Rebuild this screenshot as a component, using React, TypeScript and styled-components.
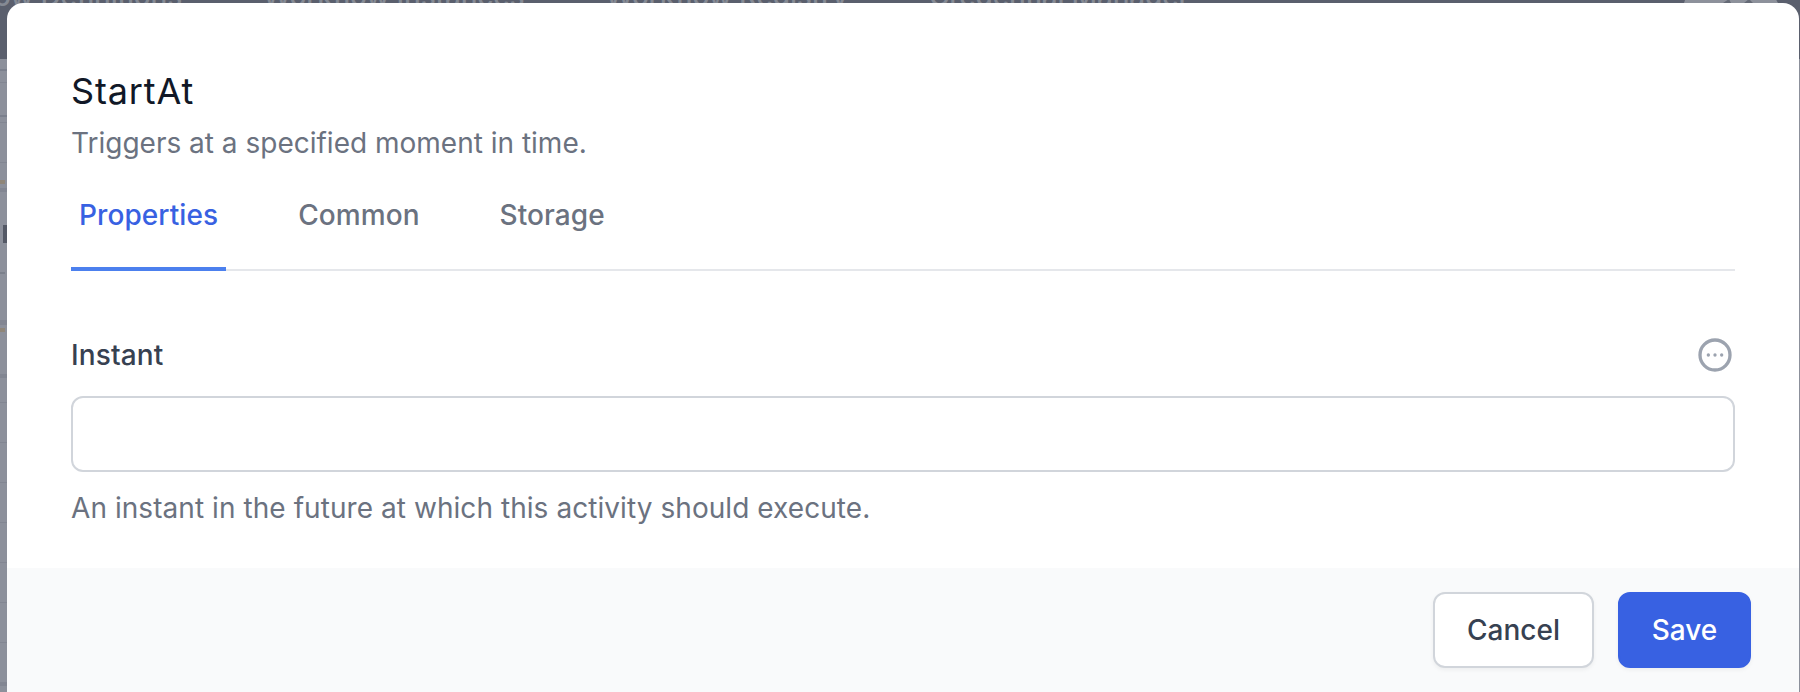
import React from "react";
import styled, { createGlobalStyle, css } from "styled-components";

const GlobalStyle = createGlobalStyle`
  * { box-sizing: border-box; }
  body {
    margin: 0;
    overflow: hidden;
    font-family: Inter, "Liberation Sans", sans-serif;
    font-size: 28px;
    line-height: 40px;
  }
  button, input { font: inherit; }
`;

const Screen = styled.div`
  display: grid;
  width: 1800px;
  height: 692px;
  overflow: hidden;
  background: #8c909b;
`;

const Backdrop = styled.div`
  grid-area: 1 / 1;
  height: 692px;
  overflow: hidden;
`;

const NavBar = styled.div`
  display: flex;
  align-items: flex-end;
  justify-content: space-between;
  height: 59px;
  padding-right: 20px;
  background: #5a5f6d;
`;

const NavItems = styled.div`
  display: flex;
  gap: 81px;
  margin: 0 0 43px -93px;
`;

const NavItem = styled.span`
  font-weight: 500;
  letter-spacing: -0.2px;
  white-space: nowrap;
  color: #858a94;
`;

const Avatar = styled.svg`
  margin-bottom: 56px;
`;

const Strip = styled.div`
  display: flex;
  flex-direction: column;
  width: 7px;
`;

const Line = styled.div<{ $gap: number; $height: number; $color?: string; $width?: number }>`
  flex: none;
  align-self: flex-start;
  width: ${(p) => p.$width ?? 7}px;
  height: ${(p) => p.$height}px;
  margin-top: ${(p) => p.$gap}px;
  background: ${(p) => p.$color ?? "#828692"};
`;

const Letter = styled(Line)`
  align-self: flex-end;
`;

const Dialog = styled.div`
  grid-area: 1 / 1;
  z-index: 1;
  width: 1792px;
  height: 689px;
  margin: 3px 0 0 7px;
  display: flex;
  flex-direction: column;
  overflow: hidden;
  border-radius: 16px 16px 0 0;
  background: #fff;
`;

const Body = styled.div`
  height: 565px;
  padding: 64px 64px 0;
`;

const Title = styled.h3`
  margin: 0;
  font-size: 36px;
  line-height: 48px;
  font-weight: 400;
  letter-spacing: 0.85px;
  color: #111827;
`;

const Muted = styled.p<{ $gap: number; $tracking?: number }>`
  margin: ${(p) => p.$gap}px 0 0;
  font-weight: 400;
  letter-spacing: ${(p) => p.$tracking ?? 0}px;
  color: #6b7280;
`;

const Tabs = styled.nav`
  display: flex;
  gap: 64px;
  height: 108px;
  box-shadow: inset 0 -2px 0 #e5e7eb;
`;

const Tab = styled.a<{ $active?: boolean }>`
  padding: 32px 8px;
  font-weight: 500;
  letter-spacing: 0.08px;
  color: #6b7280;
  border-bottom: 4px solid transparent;
  ${(p) =>
    p.$active &&
    css`
      color: #3861e2;
      border-color: #4c80ee;
    `}
`;

const FieldHead = styled.div`
  display: flex;
  justify-content: space-between;
  align-items: center;
  margin-top: 64px;
  height: 40px;
  font-weight: 500;
  letter-spacing: 0.12px;
  color: #374151;
`;

const TextInput = styled.input`
  display: block;
  width: 100%;
  height: 76px;
  margin-top: 21px;
  padding: 0 24px;
  border: 2px solid #d1d5db;
  border-radius: 12px;
  outline: none;
`;

const Footer = styled.div`
  flex: 1;
  display: flex;
  justify-content: flex-end;
  align-items: flex-start;
  gap: 24px;
  padding: 24px 48px;
  background: #f9fafb;
`;

const Button = styled.button<{ $primary?: boolean; $width: number }>`
  width: ${(p) => p.$width}px;
  height: 76px;
  padding: 0;
  border: 2px solid ${(p) => (p.$primary ? "#3861e2" : "#d1d5db")};
  border-radius: 12px;
  background: ${(p) => (p.$primary ? "#3861e2" : "#fff")};
  color: ${(p) => (p.$primary ? "#fff" : "#374151")};
  font-weight: 500;
  box-shadow: 0 2px 4px rgba(0, 0, 0, 0.05);
`;

const navItems = [
  "Workflow Definitions",
  "Workflow Instances",
  "Workflow Registry",
  "Credential Manager",
];

export default function App() {
  return (
    <Screen>
      <GlobalStyle />
      <Backdrop>
        <NavBar>
          <NavItems>
            {navItems.map((label) => (
              <NavItem key={label}>{label}</NavItem>
            ))}
          </NavItems>
          <Avatar width="100" height="64" viewBox="0 0 100 64">
            <path d="M4 64 L7 55 Q12 44 25 40 H75 Q88 44 93 55 L98 64Z" fill="#8d919b" />
            <path d="M43 64 L49 60 L51 64Z M64 64 L69 60 L73 64Z" fill="#656a76" />
          </Avatar>
        </NavBar>
        <Strip>
          <Line $gap={10} $height={2} $color="#7b808d" />
          <Line $gap={11} $height={1} />
          <Line $gap={32} $height={2} $color="#7b808d" />
          <Line $gap={5} $height={1} />
          <Line $gap={39} $height={1} />
          <Line $gap={17} $height={4} $width={5} $color="#8f8679" />
          <Line $gap={4} $height={4} />
          <Letter $gap={33} $height={18} $width={4} $color="#545966" />
          <Line $gap={29} $height={2} $width={5} $color="#7b808b" />
          <Line $gap={46} $height={5} />
          <Line $gap={3} $height={4} $width={5} $color="#8f8679" />
          <Line $gap={42} $height={4} />
          <Line $gap={24} $height={1} />
          {[1, 2, 3, 4, 5, 6].map((row) => (
            <Line key={row} $gap={39} $height={1} />
          ))}
          <Line $gap={39} $height={4} />
        </Strip>
      </Backdrop>
      <Dialog>
        <Body>
          <Title>StartAt</Title>
          <Muted $gap={8}>Triggers at a specified moment in time.</Muted>
          <Tabs>
            <Tab $active>Properties</Tab>
            <Tab>Common</Tab>
            <Tab>Storage</Tab>
          </Tabs>
          <FieldHead>
            <label>Instant</label>
            <svg width="40" height="40" viewBox="0 0 24 24" fill="none" stroke="#9ca3af" strokeWidth="2" strokeLinecap="round" strokeLinejoin="round">
              <path d="M8 12h.01M12 12h.01M16 12h.01M21 12a9 9 0 11-18 0 9 9 0 0118 0z" />
            </svg>
          </FieldHead>
          <TextInput />
          <Muted $gap={16} $tracking={0.06}>An instant in the future at which this activity should execute.</Muted>
        </Body>
        <Footer>
          <Button $width={161}>Cancel</Button>
          <Button $primary $width={133}>Save</Button>
        </Footer>
      </Dialog>
    </Screen>
  );
}
